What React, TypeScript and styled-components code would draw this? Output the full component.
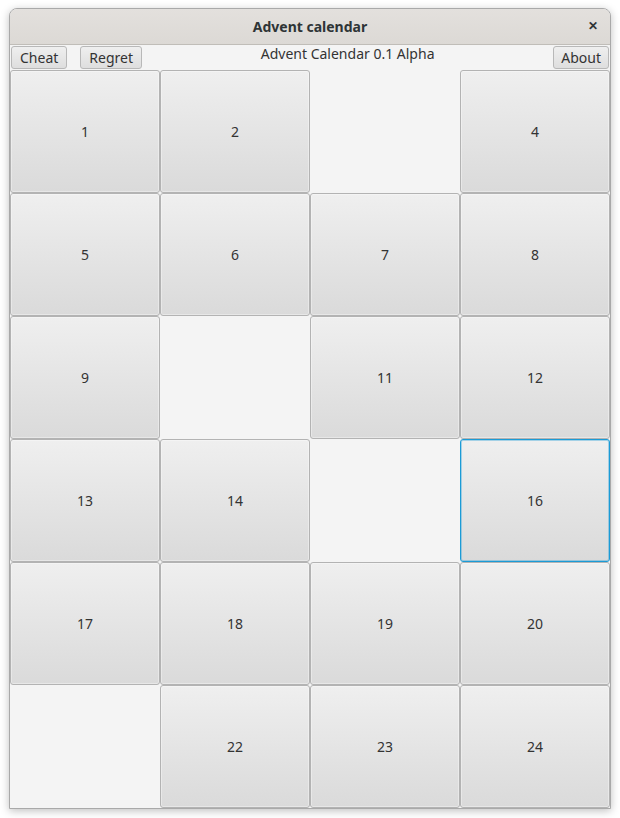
import React from "react";
import styled, { createGlobalStyle } from "styled-components";

const Global = createGlobalStyle`
  html, body { margin: 0; padding: 0; background: #ffffff; }
  body { font-family: "Noto Sans", "Open Sans", sans-serif; }
`;

const Page = styled.div`
  width: 620px;
  height: 818px;
  padding: 8px 0 0 9px;
  box-sizing: border-box;
`;

const Window = styled.div`
  width: 602px;
  height: 801px;
  box-sizing: border-box;
  border: 1px solid #a9a9a9;
  border-radius: 8px 8px 0 0;
  background: #f4f4f4;
  box-shadow: 0 2px 8px rgba(0, 0, 0, 0.25);
  display: flex;
  flex-direction: column;
  overflow: hidden;
`;

const TitleBar = styled.div`
  height: 35px;
  flex: none;
  background: linear-gradient(#e3e0dd, #dcd9d5);
  border-bottom: 1px solid #c0bdb8;
  display: flex;
  align-items: center;
  justify-content: center;
  position: relative;
`;

const Title = styled.div`
  font-family: "Noto Sans", sans-serif;
  font-weight: 700;
  font-size: 14px;
  color: #2e3436;
`;

const Close = styled.div`
  position: absolute;
  right: 12px;
  top: 10px;
  font-size: 12px;
  font-weight: 700;
  color: #2e3436;
  line-height: 14px;
`;

const Toolbar = styled.div`
  height: 25px;
  flex: none;
  display: flex;
  align-items: flex-start;
  padding: 1px 1px 0 1px;
  box-sizing: border-box;
`;

const LeftGroup = styled.div`
  display: flex;
  gap: 13px;
`;

const Center = styled.div`
  flex: 1;
  text-align: center;
  font-size: 14px;
  color: #333;
  line-height: 14px;
  padding-top: 1px;
`;

const SmallButton = styled.div<{ $pad?: number }>`
  height: 23px;
  box-sizing: border-box;
  padding: 0 ${(p) => p.$pad ?? 8}px;
  display: flex;
  align-items: center;
  font-size: 14px;
  color: #333;
  border: 1px solid #b8b8b8;
  border-radius: 3px;
  background: linear-gradient(#efefef, #dedede);
`;

const Grid = styled.div`
  flex: 1;
  display: grid;
  grid-template-columns: repeat(4, 150px);
  grid-template-rows: repeat(6, 123px);
`;

const Day = styled.div<{ $focus?: boolean }>`
  box-sizing: border-box;
  display: flex;
  align-items: center;
  justify-content: center;
  font-size: 14px;
  color: #333;
  border: 1px solid ${(p) => (p.$focus ? "#1b9bd6" : "#b3b3b3")};
  border-radius: 3px;
  background: linear-gradient(#efefef, #dadada);
  box-shadow: ${(p) =>
    p.$focus
      ? "inset 0 0 0 1px rgba(27, 155, 214, 0.35)"
      : "inset 0 0 0 1px rgba(255, 255, 255, 0.35)"};
`;

const Empty = styled.div``;

const days: (number | null)[] = [
  1, 2, null, 4,
  5, 6, 7, 8,
  9, null, 11, 12,
  13, 14, null, 16,
  17, 18, 19, 20,
  null, 22, 23, 24,
];

export default function App() {
  return (
    <>
      <Global />
      <Page>
        <Window>
          <TitleBar>
            <Title>Advent calendar</Title>
            <Close>✕</Close>
          </TitleBar>
          <Toolbar>
            <LeftGroup>
              <SmallButton>Cheat</SmallButton>
              <SmallButton>Regret</SmallButton>
            </LeftGroup>
            <Center>Advent Calendar 0.1 Alpha</Center>
            <SmallButton $pad={7}>About</SmallButton>
          </Toolbar>
          <Grid>
            {days.map((d, i) =>
              d === null ? (
                <Empty key={i} />
              ) : (
                <Day key={i} $focus={d === 16}>
                  {d}
                </Day>
              )
            )}
          </Grid>
        </Window>
      </Page>
    </>
  );
}
